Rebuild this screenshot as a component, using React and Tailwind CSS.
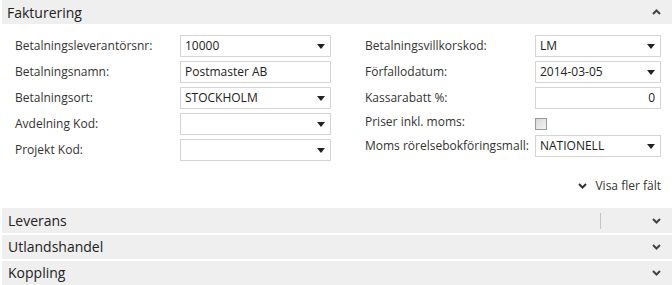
import React from 'react';

const Caret = () => (
  <svg width="8" height="5" viewBox="0 0 8 5" className="shrink-0">
    <path d="M0 0 H8 L4 5 Z" fill="#222" />
  </svg>
);

const Chevron = ({ up = false, color = '#444' }) => (
  <svg width="9" height="6" viewBox="0 0 9 6" className="shrink-0">
    <path
      d={up ? 'M1 5 L4.5 1.5 L8 5' : 'M1 1 L4.5 4.5 L8 1'}
      fill="none"
      stroke={color}
      strokeWidth="2"
    />
  </svg>
);

const Box = ({ value, dropdown, align = 'left', width }) => (
  <div
    className={`flex h-[22px] items-center border border-[#d4d4d4] bg-white pl-[4px] pr-[5px] text-[#222] ${width}`}
  >
    <span className={`flex-1 truncate ${align === 'right' ? 'text-right' : ''}`}>{value}</span>
    {dropdown && <Caret />}
  </div>
);

const Row = ({ label, labelW, children, h = 'h-[22px]' }) => (
  <div className={`flex items-center ${h}`}>
    <div className={`${labelW} text-[#333]`}>{label}</div>
    {children}
  </div>
);

const leftFields = [
  { label: 'Betalningsleverantörsnr:', value: '10000', dropdown: true },
  { label: 'Betalningsnamn:', value: 'Postmaster AB' },
  { label: 'Betalningsort:', value: 'STOCKHOLM', dropdown: true },
  { label: 'Avdelning Kod:', value: '', dropdown: true },
  { label: 'Projekt Kod:', value: '', dropdown: true },
];

const Section = ({ title, divider, h = 'h-[24px]' }) => (
  <div className={`ml-[2px] flex items-center bg-[#efefef] pl-[6px] pr-[11px] ${h}`}>
    <span className="flex-1 text-[14px] leading-[18px] text-[#222]">{title}</span>
    {divider && <div className="mr-[51px] h-[16px] w-px bg-[#c4c4c4]" />}
    <Chevron />
  </div>
);

export default function App() {
  return (
    <div
      className="h-[285px] w-[672px] overflow-hidden bg-white text-[12px]"
      style={{ fontFamily: '"Segoe UI", "Open Sans", sans-serif' }}
    >
      <div className="ml-[2px] flex h-[24px] items-center bg-[#efefef] pl-[5px] pr-[11px]">
        <span className="flex-1 text-[14px] text-[#222]">Fakturering</span>
        <Chevron up />
      </div>

      <div className="flex pt-[11px]">
        <div className="flex flex-col gap-[4px] pl-[15px]">
          {leftFields.map((f) => (
            <Row key={f.label} label={f.label} labelW="w-[165px]">
              <Box value={f.value} dropdown={f.dropdown} width="w-[151px]" />
            </Row>
          ))}
        </div>

        <div className="ml-[34px] flex flex-col gap-[4px]">
          <Row label="Betalningsvillkorskod:" labelW="w-[170px]">
            <Box value="LM" dropdown width="w-[126px]" />
          </Row>
          <Row label="Förfallodatum:" labelW="w-[170px]">
            <Box value="2014-03-05" dropdown width="w-[126px]" />
          </Row>
          <Row label="Kassarabatt %:" labelW="w-[170px]">
            <Box value="0" align="right" width="w-[126px]" />
          </Row>
          <Row label="Priser inkl. moms:" labelW="w-[170px]" h="h-[18px]">
            <div className="mt-[4px] h-[12px] w-[12px] border border-[#9a9a9a] bg-gradient-to-br from-[#d8d8d8] to-[#f4f4f4]" />
          </Row>
          <Row label="Moms rörelsebokföringsmall:" labelW="w-[170px]">
            <Box value="NATIONELL" dropdown width="w-[126px]" />
          </Row>
        </div>
      </div>

      <div className="mt-[15px] flex h-[20px] items-center justify-end gap-[8px] pr-[11px] text-[#333]">
        <Chevron color="#333" />
        <span>Visa fler fält</span>
      </div>

      <div className="mt-[12px] flex flex-col gap-[2px]">
        <Section title="Leverans" divider h="h-[25px]" />
        <Section title="Utlandshandel" />
        <Section title="Koppling" />
      </div>
    </div>
  );
}
